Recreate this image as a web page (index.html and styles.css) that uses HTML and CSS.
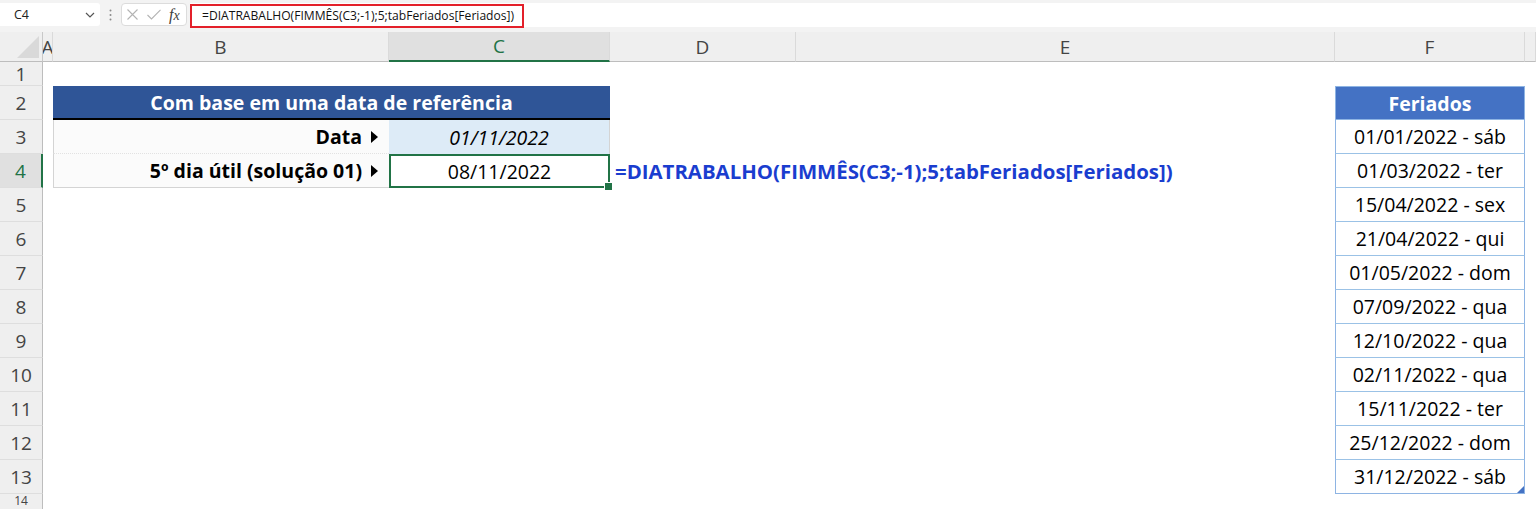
FILE: index.html
```html
<!DOCTYPE html>
<html lang="pt-BR">
<head>
<meta charset="utf-8">
<title>DIATRABALHO</title>
<link rel="stylesheet" href="styles.css">
</head>
<body>
<div class="fbar">
  <div class="namebox"><span>C4</span><svg class="chev" width="10" height="6" viewBox="0 0 10 6"><path d="M1 1l4 4 4-4" fill="none" stroke="#555" stroke-width="1.2"/></svg></div>
  <div class="grip"><svg width="3" height="12" viewBox="0 0 3 12"><circle cx="1.5" cy="1.5" r="1" fill="#8a8a8a"/><circle cx="1.5" cy="6" r="1" fill="#8a8a8a"/><circle cx="1.5" cy="10.5" r="1" fill="#8a8a8a"/></svg></div>
  <div class="fxbox">
    <svg class="ico-x" width="11" height="11" viewBox="0 0 11 11"><path d="M0.5 0.5L10.5 10.5M10.5 0.5L0.5 10.5" stroke="#b3b3b3" stroke-width="1.1"/></svg>
    <svg class="ico-ok" width="14" height="11" viewBox="0 0 14 11"><path d="M0.5 6L4.5 10L13.5 0.8" fill="none" stroke="#b3b3b3" stroke-width="1.1"/></svg>
    <span class="fx"><i>f</i><i class="fx-x">x</i></span>
  </div>
  <div class="finput"><span class="fhl">=DIATRABALHO(FIMMÊS(C3;-1);5;tabFeriados[Feriados])</span></div>
</div>

<div class="sheet">
  <!-- column headers -->
  <div class="corner"><svg width="22" height="22" viewBox="0 0 22 22"><polygon points="22,0 22,22 0,22" fill="#d9d9d9"/></svg></div>
  <div class="ch">A</div>
  <div class="ch">B</div>
  <div class="ch sel">C</div>
  <div class="ch">D</div>
  <div class="ch">E</div>
  <div class="ch">F</div>
  <div class="ch"></div>

  <!-- row 1 -->
  <div class="rh">1</div><div class="fill7"></div>

  <!-- row 2 -->
  <div class="rh">2</div><div></div>
  <div class="t-head">Com base em uma data de referência</div>
  <div></div><div></div>
  <div class="f-head">Feriados</div><div></div>

  <!-- row 3 -->
  <div class="rh">3</div><div></div>
  <div class="b-label">Data<span class="tri"></span></div>
  <div class="c-date">01/11/2022</div>
  <div></div><div></div>
  <div class="f-cell">01/01/2022 - sáb</div><div></div>

  <!-- row 4 -->
  <div class="rh sel">4</div><div></div>
  <div class="b-label last">5º dia útil (solução 01)<span class="tri"></span></div>
  <div class="c-sel">08/11/2022</div>
  <div class="d-formula">=DIATRABALHO(FIMMÊS(C3;-1);5;tabFeriados[Feriados])</div><div></div>
  <div class="f-cell">01/03/2022 - ter</div><div></div>

  <div class="rh">5</div><div class="fill5"></div><div class="f-cell">15/04/2022 - sex</div><div></div>
  <div class="rh">6</div><div class="fill5"></div><div class="f-cell">21/04/2022 - qui</div><div></div>
  <div class="rh">7</div><div class="fill5"></div><div class="f-cell">01/05/2022 - dom</div><div></div>
  <div class="rh">8</div><div class="fill5"></div><div class="f-cell">07/09/2022 - qua</div><div></div>
  <div class="rh">9</div><div class="fill5"></div><div class="f-cell">12/10/2022 - qua</div><div></div>
  <div class="rh">10</div><div class="fill5"></div><div class="f-cell">02/11/2022 - qua</div><div></div>
  <div class="rh">11</div><div class="fill5"></div><div class="f-cell">15/11/2022 - ter</div><div></div>
  <div class="rh">12</div><div class="fill5"></div><div class="f-cell">25/12/2022 - dom</div><div></div>
  <div class="rh">13</div><div class="fill5"></div><div class="f-cell f-end">31/12/2022 - sáb</div><div></div>
  <div class="rh rh-cut">14</div><div class="fill7"></div>
</div>
</body>
</html>
```

FILE: styles.css
```css
* { box-sizing: border-box; }

body {
  margin: 0;
  width: 1536px;
  height: 509px;
  overflow: hidden;
  background: #ffffff;
  font-family: "Open Sans", "Noto Sans", sans-serif;
  color: #000;
}

/* ---------- formula bar ---------- */
.fbar {
  display: flex;
  align-items: flex-start;
  height: 32px;
  padding-top: 3px;
  background: #f3f3f3;
}

.namebox {
  width: 100px;
  height: 23px;
  background: #fff;
  display: flex;
  align-items: center;
  justify-content: space-between;
  padding: 0 5px 0 14px;
  font-size: 12.5px;
  color: #222;
  border-radius: 0 3px 3px 0;
}

.grip {
  width: 21px;
  height: 23px;
  display: flex;
  align-items: center;
  justify-content: center;
}

.fxbox {
  width: 66px;
  height: 23px;
  background: #fff;
  border: 1px solid #dcdcdc;
  border-radius: 4px;
  display: flex;
  align-items: center;
  padding-left: 5px;
}
.ico-x { margin-right: 9px; }
.ico-ok { margin-right: 8px; }
.fx {
  font-family: "Liberation Serif", "DejaVu Serif", serif;
  font-size: 16px;
  color: #404040;
  line-height: 1;
}
.fx-x { font-size: 14px; }

.finput {
  flex: 1;
  height: 24px;
  margin-left: 3px;
  background: #fff;
}
.fhl {
  display: inline-block;
  height: 24px;
  border: 2px solid #e3202a;
  padding: 0 8px 0 10px;
  line-height: 20px;
  font-size: 12.1px;
  color: #111;
  white-space: nowrap;
}

/* ---------- sheet ---------- */
.sheet {
  display: grid;
  grid-template-columns: 43px 10px 336px 221px 186px 539px 190px 1fr;
  grid-template-rows: 30px 24px repeat(12, 34px) 15px;
  font-size: 19.5px;
}

.corner {
  background: #efefef;
  border-right: 1px solid #c8c8c8;
  border-bottom: 1px solid #bdbdbd;
  display: flex;
  align-items: flex-end;
  justify-content: flex-end;
  padding: 0 3px 3px 0;
}

.ch {
  background: #efefef;
  border-right: 1px solid #dadada;
  border-bottom: 1px solid #bdbdbd;
  display: flex;
  align-items: center;
  justify-content: center;
  overflow: hidden;
  font-size: 19px;
  color: #444;
}
.ch.sel {
  background: #e0e0e0;
  color: #217346;
  border-bottom: 2px solid #217346;
}

.rh {
  background: #efefef;
  border-right: 1px solid #bdbdbd;
  border-bottom: 1px solid #dedede;
  display: flex;
  align-items: center;
  justify-content: center;
  font-size: 19px;
  color: #444;
}
.rh.sel {
  background: #e0e0e0;
  color: #217346;
  border-right: 2px solid #217346;
}
.rh-cut {
  align-items: flex-start;
  font-size: 12px;
  line-height: 14px;
  border-bottom: none;
}

.fill7 { grid-column: span 7; }
.fill5 { grid-column: span 5; }

/* data-reference table */
.t-head {
  grid-column: span 2;
  background: #2f5597;
  color: #fff;
  font-weight: 700;
  display: flex;
  align-items: center;
  justify-content: center;
  border-bottom: 2px solid #000;
}

.b-label {
  background: #fbfbfb;
  border-left: 1px solid #d4d4d4;
  border-bottom: 1px dotted #e2e2e2;
  display: flex;
  align-items: center;
  justify-content: flex-end;
  padding-right: 11px;
  font-weight: 700;
  white-space: nowrap;
}
.b-label.last { border-bottom: 1px solid #d4d4d4; }

.tri {
  display: inline-block;
  width: 0;
  height: 0;
  margin-left: 9px;
  border-left: 7px solid #000;
  border-top: 6px solid transparent;
  border-bottom: 6px solid transparent;
}

.c-date {
  background: #ddebf7;
  border-right: 1px solid #d4d4d4;
  display: flex;
  align-items: center;
  justify-content: center;
  font-style: italic;
}

.c-sel {
  position: relative;
  border: 2px solid #217346;
  display: flex;
  align-items: center;
  justify-content: center;
}
.c-sel::after {
  content: "";
  position: absolute;
  right: -5px;
  bottom: -5px;
  width: 7px;
  height: 7px;
  background: #217346;
  border: 1px solid #fff;
}

.d-formula {
  display: flex;
  align-items: center;
  padding-left: 5px;
  white-space: nowrap;
  overflow: visible;
  font-size: 20.4px;
  font-weight: 700;
  color: #1a3dcf;
  position: relative;
  z-index: 1;
}

/* holiday table */
.f-head {
  background: #4472c4;
  color: #fff;
  font-weight: 700;
  border: 1px solid #8eb4e3;
  display: flex;
  align-items: center;
  justify-content: center;
}
.f-cell {
  position: relative;
  border-left: 1px solid #8eb4e3;
  border-right: 1px solid #8eb4e3;
  border-bottom: 1px solid #9bc2e6;
  display: flex;
  align-items: center;
  justify-content: center;
  white-space: nowrap;
}
.f-end { border-bottom-color: #8eb4e3; }
.f-end::after {
  content: "";
  position: absolute;
  right: 0;
  bottom: 0;
  width: 0;
  height: 0;
  border-left: 7px solid transparent;
  border-bottom: 7px solid #4472c4;
}
```
